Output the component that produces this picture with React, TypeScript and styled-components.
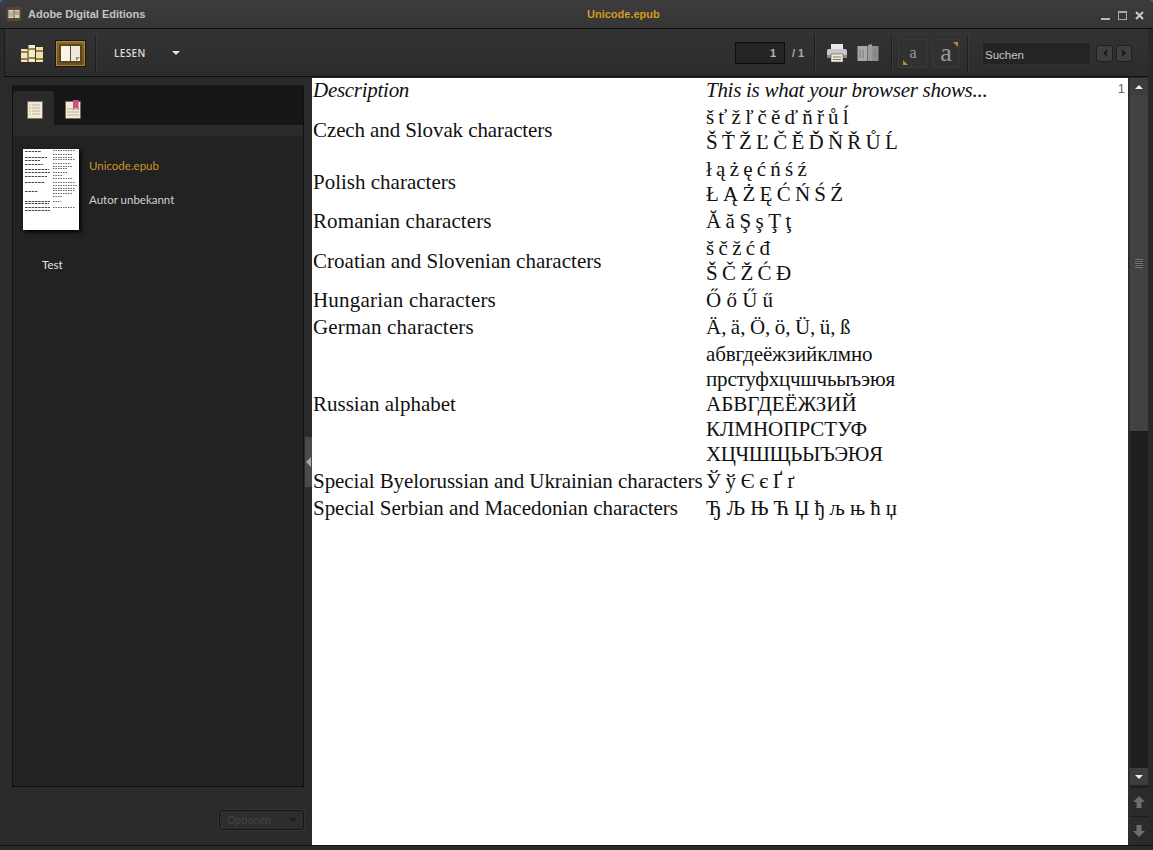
import React from "react";
import styled, { createGlobalStyle } from "styled-components";

const Global = createGlobalStyle`
  html, body { margin: 0; padding: 0; background: #1f6fa8; overflow: hidden; }
  * { box-sizing: border-box; }
`;

const Win = styled.div`
  width: 1153px; height: 850px; display: flex; flex-direction: column;
  background: #2a2a2a; border-radius: 5px 5px 0 0; overflow: hidden;
  font-family: "Liberation Sans", Arial, sans-serif;
`;
const TitleBar = styled.div`
  height: 29px; flex: none; display: grid; grid-template-columns: 577px auto 1fr; align-items: center;
  padding: 0 9px 0 6px;
  background: linear-gradient(#3c3c3c, #353535);
  border-bottom: 1px solid #101010;
`;
const TitleLeft = styled.div`display: flex; align-items: center; gap: 6px;`;
const AppName = styled.span`font-size: 11px; font-weight: bold; color: #c4c4c4;`;
const DocName = styled.span`font-size: 11px; font-weight: bold; color: #d69a1e; padding-left: 4px;`;
const WinBtns = styled.div`display: flex; justify-content: flex-end; align-items: center; gap: 8px; padding-top: 2px;`;

const Toolbar = styled.div`
  height: 48px; flex: none; display: flex; align-items: center;
  margin: 0 5px 0 4px; padding-top: 1px;
  background: linear-gradient(#333333, #2c2c2c);
  border-left: 1px solid #1a1a1a; border-bottom: 1px solid #0e0e0e;
`;
const ToolIcon = styled.div<{ $ml?: number; $w?: number }>`
  margin-left: ${p => p.$ml ?? 0}px; width: ${p => p.$w ?? 30}px; height: 30px; flex: none;
  display: flex; align-items: center; justify-content: center;
`;
const ActiveIcon = styled.div`
  margin-left: 8px; width: 31px; height: 27px; flex: none;
  display: flex; align-items: center; justify-content: center;
  background: linear-gradient(#8a6a2c, #6b4f1c); border: 1px solid #1c1408; box-shadow: inset 0 0 0 1px #a9853d;
`;
const Sep = styled.div<{ $ml: number }>`
  width: 1px; height: 36px; background: #1e1e1e; box-shadow: 1px 0 0 #3a3a3a; margin-left: ${p => p.$ml}px; flex: none;
`;
const Lesen = styled.span`
  margin-left: 18px; font: 600 10px "Open Sans", sans-serif; letter-spacing: 0.35px; color: #dcdcdc; width: 45px;
`;
const Caret = styled.div`
  margin-left: 13px; width: 0; height: 0; border-left: 4px solid transparent; border-right: 4px solid transparent; border-top: 4px solid #e4e4e4;
`;
const Spacer = styled.div`flex: 1;`;
const PageBox = styled.div`
  width: 50px; height: 22px; background: #242424; border: 1px solid #0c0c0c; color: #b5b5b5;
  font-size: 11px; font-weight: bold; text-align: right; padding: 4px 8px 0 0; flex: none;
`;
const PageTotal = styled.span`margin-left: 7px; color: #aaa; font-size: 11px; font-weight: bold; width: 22px; flex: none; white-space: pre;`;
const FontBtn = styled.div<{ $ml: number; $w: number; $size: number }>`
  margin-left: ${p => p.$ml}px; width: ${p => p.$w}px; height: 29px; flex: none; position: relative;
  background: #313131; border: 1px solid #383838;
  font: ${p => p.$size}px/25px "Liberation Serif", serif; color: #9a9a9a; text-align: center;
`;
const FontMark = styled.i<{ $big?: boolean }>`
  position: absolute; width: 0; height: 0;
  ${p => p.$big
    ? "right: 1px; top: 2px; border-top: 5px solid #b78b30; border-left: 5px solid transparent;"
    : "left: 4px; bottom: 2px; border-bottom: 5px solid #b78b30; border-right: 5px solid transparent;"}
`;
const Search = styled.div`
  margin-left: 14px; width: 109px; height: 23px; flex: none; background: #242424; border: 1px solid #333;
  color: #c8c8c8; font-size: 11.5px; line-height: 25px; padding-left: 2px;
`;
const NavBtn = styled.div<{ $ml: number; $w: number }>`
  margin-left: ${p => p.$ml}px; width: ${p => p.$w}px; height: 17px; flex: none; background: #3f3f3f; border: 1px solid #1f1f1f; border-radius: 3px;
  display: flex; align-items: center; justify-content: center;
`;
const Tri = styled.i<{ $dir: "l" | "r" }>`
  width: 0; height: 0; border-top: 4px solid transparent; border-bottom: 4px solid transparent;
  ${p => (p.$dir === "l" ? "border-right: 4px solid #1c1c1c;" : "border-left: 4px solid #1c1c1c;")}
`;
const RightGap = styled.div`width: 16px; flex: none;`;

const Main = styled.div`flex: 1; display: flex; min-height: 0; background: #2a2a2a; padding-top: 1px;`;
const Left = styled.div`
  width: 305px; flex: none; padding: 7px 1px 0 12px; display: flex; flex-direction: column;
`;
const Panel = styled.div`
  height: 702px; display: flex; flex-direction: column; background: #222222; border: 1px solid #0f0f0f; border-top: none;
`;
const TabRow = styled.div`height: 40px; display: flex; background: #161616; flex: none; border-top: 1px solid #1d1d1d;`;
const Tab = styled.div<{ $active?: boolean }>`
  width: ${p => (p.$active ? 41 : 37)}px; margin-top: ${p => (p.$active ? 5 : 0)}px; padding-top: ${p => (p.$active ? 4 : 8)}px; padding-left: ${p => (p.$active ? 3 : 0)}px;
  display: flex; align-items: center; justify-content: center; background: ${p => (p.$active ? "#2a2a2a" : "transparent")};
  border-radius: 3px 3px 0 0;
`;
const TabStrip = styled.div`height: 11px; background: #2a2a2a; flex: none;`;
const BookRow = styled.div`display: flex; padding: 13px 0 0 10px;`;
const BookInfo = styled.div`margin-left: 10px; padding-top: 9px; font-family: Lato, sans-serif; font-size: 11.5px;`;
const BookTitle = styled.div`color: #c8962a; line-height: 16px;`;
const BookAuthor = styled.div`color: #d0d0d0; line-height: 16px; margin-top: 18px;`;
const Thumb = styled.div`width: 56px; height: 81px; background: #fff; box-shadow: 2px 2px 4px #000; flex: none;`;
const Shelf = styled.div`color: #e2e2e2; font-family: Lato, sans-serif; font-size: 11.5px; margin: 27px 0 0 29px; line-height: 16px;`;
const OptRow = styled.div`display: flex; justify-content: flex-end; margin-top: 23px;`;
const OptBtn = styled.div`
  width: 85px; height: 20px; background: #2e2e2e; border: 1px solid #161616; border-radius: 3px; box-shadow: 0 0 0 1px #333;
  display: flex; align-items: center; justify-content: space-between; padding: 0 6px 0 7px;
  color: #434343; font-family: Lato, sans-serif; font-size: 10.5px;
`;
const OptCaret = styled.i`width: 0; height: 0; border-left: 4px solid transparent; border-right: 4px solid transparent; border-top: 4px solid #1c1c1c;`;

const Splitter = styled.div`width: 7px; flex: none; position: relative; background: #2a2a2a;`;
const Grip = styled.div`
  position: absolute; left: 0; top: 359px; width: 7px; height: 50px; background: #4a4a4a;
  display: flex; align-items: center; justify-content: center;
`;
const GripTri = styled.i`width: 0; height: 0; border-top: 5px solid transparent; border-bottom: 5px solid transparent; border-right: 5px solid #a8a8a8;`;

const Page = styled.div`
  width: 816px; height: 767px; flex: none; background: #fff; position: relative; overflow: hidden;
`;
const PageNum = styled.span`position: absolute; right: 3px; top: 3px; font-size: 13px; color: #666;`;
const Table = styled.table`
  border-collapse: separate; border-spacing: 1px 2px; margin: -2px 0 0 0; table-layout: fixed; width: 816px;
  font-family: "Liberation Serif", "Times New Roman", serif; font-size: 21px; line-height: 25px; color: #111;
`;
const Col1 = styled.col`width: 392px;`;
const Td = styled.td<{ $em?: boolean; $ls?: number }>`
  padding: 0; white-space: nowrap; vertical-align: middle;
  font-style: ${p => (p.$em ? "italic" : "normal")};
  letter-spacing: ${p => (p.$em ? -0.28 : p.$ls ?? 0)}px;
`;
const Line = styled.div<{ $ws: number; $ls: number }>`
  word-spacing: ${p => p.$ws}px; letter-spacing: ${p => p.$ls}px;
`;

const Scroll = styled.div`
  width: 19px; flex: none; margin-left: 1px; height: 767px; display: flex; flex-direction: column; background: #222; border-left: 1px solid #333;
`;
const SBtn = styled.div`
  height: 17px; background: #3d3d3d; display: flex; align-items: center; justify-content: center; flex: none;
`;
const Thumb2 = styled.div`height: 337px; background: #424242; flex: none; display: flex; align-items: center; justify-content: center; border-bottom: 1px solid #1a1a1a;`;
const Grips = styled.div`
  width: 8px; height: 9px;
  background: repeating-linear-gradient(#7a7a7a 0 1px, #2e2e2e 1px 2px);
`;
const Track = styled.div`flex: 1; background: #1e1e1e;`;
const Small = styled.i<{ $up?: boolean }>`
  width: 0; height: 0; border-left: 4px solid transparent; border-right: 4px solid transparent;
  ${p => (p.$up ? "border-bottom: 4px solid #eee;" : "border-top: 4px solid #eee;")}
`;
const JumpGroup = styled.div`flex: none; margin-top: 2px; display: flex; flex-direction: column;`;
const PageJump = styled.div`height: 29px; background: #2b2b2b; border-top: 1px solid #1c1c1c; display: flex; align-items: center; justify-content: center;`;
const Frame = styled.div`flex: 1; background: #2a2a2a;`;
const Bottom = styled.div`height: 5px; flex: none; background: #2a2a2a; border-top: 1px solid #111;`;

type Ln = { t: string; ws?: number; ls?: number };
const rows: { d: string; dl?: number; c: Ln[] }[] = [
  { d: "Czech and Slovak characters", dl: -0.1, c: [{ t: "š ť ž ľ č ě ď ň ř ů ĺ", ws: -1.1 }, { t: "Š Ť Ž Ľ Č Ě Ď Ň Ř Ů Ĺ", ws: -1 }] },
  { d: "Polish characters", c: [{ t: "ł ą ż ę ć ń ś ź", ws: -1 }, { t: "Ł Ą Ż Ę Ć Ń Ś Ź", ws: -1 }] },
  { d: "Romanian characters", dl: 0.1, c: [{ t: "Ă ă Ş ş Ţ ţ", ws: -0.8 }] },
  { d: "Croatian and Slovenian characters", dl: 0.03, c: [{ t: "š č ž ć đ", ws: -0.9 }, { t: "Š Č Ž Ć Đ", ws: -0.9 }] },
  { d: "Hungarian characters", dl: 0.2, c: [{ t: "Ő ő Ű ű" }] },
  { d: "German characters", dl: 0.17, c: [{ t: "Ä, ä, Ö, ö, Ü, ü, ß", ws: -0.8 }] },
  {
    d: "Russian alphabet",
    c: [
      { t: "абвгдеёжзийклмно", ls: -0.1 },
      { t: "прстуфхцчшчьыъэюя", ls: -0.15 },
      { t: "АБВГДЕЁЖЗИЙ" },
      { t: "КЛМНОПРСТУФ" },
      { t: "ХЦЧШЩЬЫЪЭЮЯ", ls: -0.4 },
    ],
  },
  { d: "Special Byelorussian and Ukrainian characters", dl: -0.05, c: [{ t: "Ў ў Є є Ґ ґ", ws: -0.6 }] },
  { d: "Special Serbian and Macedonian characters", dl: -0.03, c: [{ t: "Ђ Љ Њ Ћ Џ ђ љ њ ћ џ", ws: -0.2 }] },
];

const AppIcon = () => (
  <svg width="16" height="16" viewBox="0 0 16 16">
    <rect x="0.5" y="1" width="15" height="14" rx="2" fill="#5a4632" />
    <rect x="2.5" y="4" width="5" height="8" fill="#e8e4d8" />
    <rect x="8.5" y="4" width="5" height="8" fill="#d8d2c0" />
    <path d="M3 6h4M3 8h4M3 10h4M9 6h4M9 8h4" stroke="#7a6a50" strokeWidth="0.8" />
  </svg>
);
const Books = () => (
  <svg width="24" height="19" viewBox="0 0 24 19">
    <rect x="1" y="5" width="6.5" height="13" fill="#f3e6b8" />
    <rect x="8.5" y="1" width="6.5" height="17" fill="#f6ebc4" />
    <rect x="16" y="3" width="7" height="15" fill="#f0e2b0" />
    <path d="M1 8h6.5M1 15h6.5M8.5 5h6.5M8.5 14h6.5M16 7h7M16 15h7" stroke="#7d5f24" strokeWidth="1.4" />
  </svg>
);
const OpenBook = () => (
  <svg width="23" height="19" viewBox="0 0 23 19">
    <rect x="0" y="0" width="23" height="19" fill="#5c4519" />
    <rect x="2" y="2" width="9" height="15" fill="#f7f4ea" />
    <rect x="12" y="2" width="9" height="15" fill="#eceae0" />
    <path d="M17 17l4-4h-4z" fill="#a08a58" />
  </svg>
);
const Printer = () => (
  <svg width="22" height="20" viewBox="0 0 22 20">
    <rect x="5" y="1" width="12" height="6" fill="#e8e8e8" />
    <rect x="1" y="6" width="20" height="9" rx="2" fill="#c8c8c8" />
    <rect x="1" y="12" width="20" height="3" fill="#8a8a8a" />
    <rect x="5" y="11" width="12" height="8" fill="#f3ecd4" stroke="#555" strokeWidth="0.6" />
    <path d="M7 14h8M7 16.5h8" stroke="#777" strokeWidth="1" />
  </svg>
);
const ReaderIcon = () => (
  <svg width="22" height="20" viewBox="0 0 22 20">
    <rect x="0.5" y="3" width="10" height="15" fill="#a9a9a9" />
    <rect x="11.5" y="3" width="10" height="15" fill="#8e8e8e" />
    <path d="M11 2l4 -1v17h-4z" fill="#9c9c9c" />
    <path d="M3 7v8M6 7v8M18 7v8" stroke="#7a7a7a" strokeWidth="1" />
  </svg>
);
const TocIcon = () => (
  <svg width="16" height="18" viewBox="0 0 16 18">
    <rect x="0.5" y="0.5" width="15" height="17" fill="#f2ecd6" stroke="#6d6248" strokeWidth="0.6" />
    <path d="M5 4h8M5 7h8M5 10h8M5 13h8" stroke="#b9b29c" strokeWidth="1" />
    <path d="M2.5 4h1M2.5 7h1M2.5 10h1M2.5 13h1" stroke="#8c846c" strokeWidth="1" />
  </svg>
);
const MarkIcon = () => (
  <svg width="16" height="19" viewBox="0 0 16 19">
    <rect x="0.5" y="1.5" width="15" height="17" fill="#f2ecd6" stroke="#6d6248" strokeWidth="0.6" />
    <path d="M2 9h12M2 12h12M2 15h12" stroke="#b9b29c" strokeWidth="1" />
    <path d="M8 0h5.5v10l-2.7-2.4L8 10z" fill="#d24d7c" />
  </svg>
);
const JumpArrow = ({ down }: { down?: boolean }) => (
  <svg width="12" height="12" viewBox="0 0 12 12">
    <path d={down ? "M3.5 0h5v6H12L6 12 0 6h3.5z" : "M3.5 12h5V6H12L6 0 0 6h3.5z"} fill="#6e6e6e" />
  </svg>
);
const ThumbArt = () => {
  const l: [number, number][] = [[2, 16], [8, 22], [11, 15], [15, 18], [20, 24], [23, 25], [27, 22], [33, 20], [42, 13], [52, 25], [54, 24], [58, 25], [61, 25]];
  const r: [number, number][] = [[1, 22], [5, 19], [8, 20], [10, 22], [14, 18], [17, 20], [19, 14], [23, 15], [26, 10], [29, 19], [33, 22], [36, 24], [39, 22], [41, 22], [44, 20], [47, 10], [52, 8], [58, 22]];
  return (
    <svg width="56" height="81" viewBox="0 0 56 81">
      {l.map(([y, w]) => <line key={y} x1="2" x2={2 + w} y1={y + 0.5} y2={y + 0.5} stroke="#444" strokeWidth="1.1" strokeDasharray="2.5 0.8" />)}
      {r.map(([y, w]) => <line key={y} x1="30" x2={30 + w} y1={y + 0.5} y2={y + 0.5} stroke="#666" strokeWidth="1.1" strokeDasharray="1.5 1" />)}
    </svg>
  );
};

export default function App() {
  return (
    <Win>
      <Global />
      <TitleBar>
        <TitleLeft><AppIcon /><AppName>Adobe Digital Editions</AppName></TitleLeft>
        <DocName>Unicode.epub</DocName>
        <WinBtns>
          <svg width="9" height="9" viewBox="0 0 9 9"><rect x="0" y="7" width="9" height="2" fill="#bbb" /></svg>
          <svg width="9" height="9" viewBox="0 0 9 9"><rect x="0.5" y="0.5" width="8" height="8" fill="none" stroke="#aaa" /><rect x="0" y="0" width="9" height="2" fill="#aaa" /></svg>
          <svg width="9" height="9" viewBox="0 0 9 9"><path d="M1 1l7 7M8 1l-7 7" stroke="#ccc" strokeWidth="2" /></svg>
        </WinBtns>
      </TitleBar>
      <Toolbar>
        <ToolIcon $ml={12}><Books /></ToolIcon>
        <ActiveIcon><OpenBook /></ActiveIcon>
        <Sep $ml={9} />
        <Lesen>LESEN</Lesen>
        <Caret />
        <Spacer />
        <PageBox>1</PageBox>
        <PageTotal>/ 1</PageTotal>
        <Sep $ml={0} />
        <ToolIcon $ml={11} $w={22}><Printer /></ToolIcon>
        <ToolIcon $ml={9} $w={22}><ReaderIcon /></ToolIcon>
        <Sep $ml={12} />
        <FontBtn $ml={6} $w={30} $size={16}>a<FontMark /></FontBtn>
        <FontBtn $ml={4} $w={28} $size={26}>a<FontMark $big /></FontBtn>
        <Sep $ml={7} />
        <Search>Suchen</Search>
        <NavBtn $ml={5} $w={17}><Tri $dir="l" /></NavBtn>
        <NavBtn $ml={3} $w={16}><Tri $dir="r" /></NavBtn>
        <RightGap />
      </Toolbar>
      <Main>
        <Left>
          <Panel>
            <TabRow>
              <Tab $active><TocIcon /></Tab>
              <Tab><MarkIcon /></Tab>
            </TabRow>
            <TabStrip />
            <BookRow>
              <Thumb><ThumbArt /></Thumb>
              <BookInfo>
                <BookTitle>Unicode.epub</BookTitle>
                <BookAuthor>Autor unbekannt</BookAuthor>
              </BookInfo>
            </BookRow>
            <Shelf>Test</Shelf>
          </Panel>
          <OptRow><OptBtn>Optionen<OptCaret /></OptBtn></OptRow>
        </Left>
        <Splitter><Grip><GripTri /></Grip></Splitter>
        <Page>
          <PageNum>1</PageNum>
          <Table>
            <colgroup><Col1 /><col /></colgroup>
            <tbody>
              <tr><Td $em>Description</Td><Td $em>This is what your browser shows...</Td></tr>
              {rows.map(r => (
                <tr key={r.d}>
                  <Td $ls={r.dl}>{r.d}</Td>
                  <Td>{r.c.map(x => <Line key={x.t} $ws={x.ws ?? 0} $ls={x.ls ?? 0}>{x.t}</Line>)}</Td>
                </tr>
              ))}
            </tbody>
          </Table>
        </Page>
        <Scroll>
          <SBtn><Small $up /></SBtn>
          <Thumb2><Grips /></Thumb2>
          <Track />
          <SBtn><Small /></SBtn>
          <JumpGroup>
            <PageJump><JumpArrow /></PageJump>
            <PageJump><JumpArrow down /></PageJump>
          </JumpGroup>
        </Scroll>
        <Frame />
      </Main>
      <Bottom />
    </Win>
  );
}
